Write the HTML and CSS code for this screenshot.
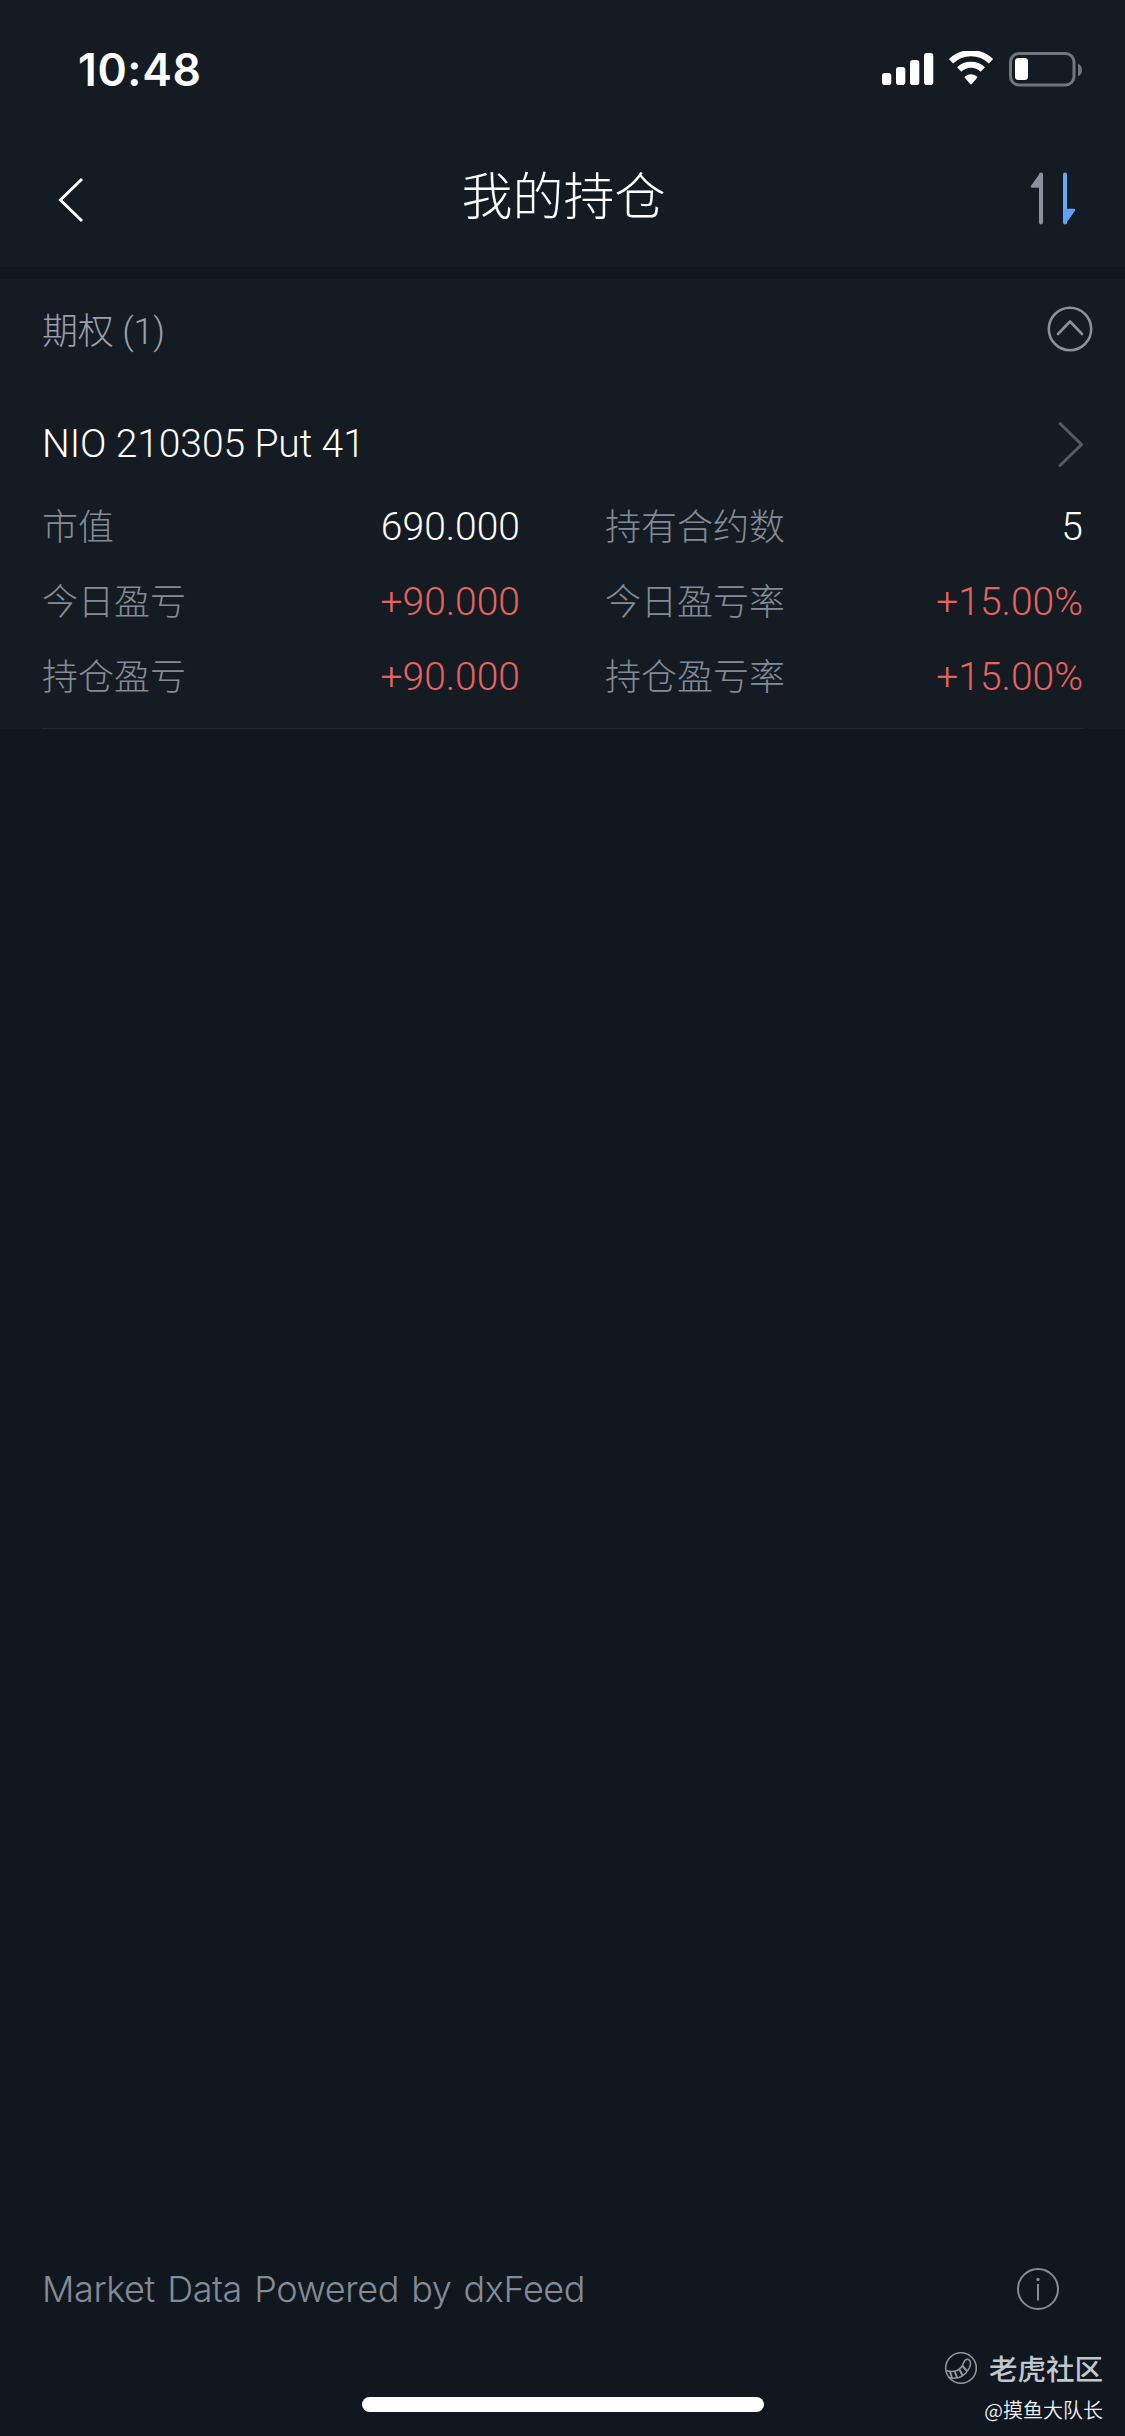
FILE: index.html
```html
<!DOCTYPE html>
<html lang="zh-CN">
<head>
<meta charset="utf-8">
<title>我的持仓</title>
<link rel="stylesheet" href="styles.css">
</head>
<body>
<div class="screen">
  <header class="top">
    <div class="status">
      <span class="time">10:48</span>
      <svg class="status-icons" width="202" height="36" viewBox="0 0 202 36">
        <g fill="#fff">
          <rect x="0" y="22" width="9.300" height="12" rx="2.800"/>
          <rect x="14" y="16" width="9.300" height="18" rx="2.800"/>
          <rect x="28" y="9" width="9.300" height="25" rx="2.800"/>
          <rect x="42" y="2" width="9.300" height="32" rx="2.800"/>
          <path d="M83 25.500q6-4.500 12 0q.9.800 0 1.600l-5.200 6q-.8.700-1.600 0l-5.200-6q-.9-.8 0-1.600z"/>
        </g>
        <path d="M69 11.200A29 29 0 0 1 109 11.200M77.200 19.400A17.300 17.300 0 0 1 100.800 19.400" transform="translate(0 -1)" fill="none" stroke="#fff" stroke-width="6.200"/>
        <rect x="128.500" y="2.500" width="63.500" height="31.500" rx="8.500" fill="none" stroke="#73777c" stroke-width="3"/>
        <rect x="133" y="7" width="13" height="22" rx="3.500" fill="#fff"/>
        <path d="M196 12.500q4 2 4 6.500t-4 6.500z" fill="#73777c"/>
      </svg>
    </div>
    <nav class="nav">
      <svg class="nav-icon" width="60" height="60" viewBox="0 0 60 60"><path d="M40 9L18.500 30L40 51" fill="none" stroke="#fff" stroke-width="3"/></svg>
      <h1 class="title">我的持仓</h1>
      <svg class="nav-icon" width="60" height="60" viewBox="0 0 60 60">
        <path d="M16 4.500V52.500" stroke="#8b909c" stroke-width="4" stroke-linecap="round"/>
        <path d="M16 4L7 16.500H16z" fill="#8b909c" stroke="#8b909c" stroke-width="2.500" stroke-linejoin="round"/>
        <path d="M40 4.500V52.500" stroke="#6ba5f5" stroke-width="4" stroke-linecap="round"/>
        <path d="M40 52.500L49 40H40z" fill="#5fa0fb" stroke="#5fa0fb" stroke-width="2.500" stroke-linejoin="round"/>
      </svg>
    </nav>
  </header>

  <main class="panel">
    <div class="section-head">
      <span class="section-name">期权 (1)</span>
      <svg width="46" height="46" viewBox="0 0 46 46" fill="none" stroke="#8b909c" stroke-width="2.600" stroke-linecap="round" stroke-linejoin="round"><circle cx="23" cy="23" r="21.200"/><path d="M11 28L23 15.500L35 28"/></svg>
    </div>
    <section class="holding">
      <div class="holding-head">
        <span class="holding-name">NIO 210305 Put 41</span>
        <svg width="28" height="48" viewBox="0 0 28 48"><path d="M5 2.500L26.500 23.500L5 44.500" fill="none" stroke="#555a61" stroke-width="3" stroke-linecap="round"/></svg>
      </div>
      <dl class="stats">
        <div class="stat"><dt>市值</dt><dd>690.000</dd></div>
        <div class="stat"><dt>持有合约数</dt><dd>5</dd></div>
        <div class="stat"><dt>今日盈亏</dt><dd class="gain">+90.000</dd></div>
        <div class="stat"><dt>今日盈亏率</dt><dd class="gain">+15.00%</dd></div>
        <div class="stat"><dt>持仓盈亏</dt><dd class="gain">+90.000</dd></div>
        <div class="stat"><dt>持仓盈亏率</dt><dd class="gain">+15.00%</dd></div>
      </dl>
    </section>
  </main>

  <footer class="footer">
    <span class="source">Market Data Powered by dxFeed</span>
    <svg width="44" height="44" viewBox="0 0 44 44"><circle cx="22" cy="22" r="20" fill="none" stroke="#858b96" stroke-width="2"/><path d="M22 17V33.500" stroke="#858b96" stroke-width="2"/><circle cx="22" cy="12.500" r="1.700" fill="#858b96"/></svg>
  </footer>
  <div class="home-bar"></div>
  <div class="credit">
    <div class="brand">
      <svg width="34" height="34" viewBox="0 0 34 34" fill="none" stroke="#969a9f" stroke-width="1.500">
        <circle cx="17" cy="17" r="15.300"/>
        <path d="M2.500 19.500Q8 21.500 13 19.500Q18 17 19.500 12Q21.500 7.500 24.500 8.500Q28 10.500 25.500 16.500Q22 24 15 26.500Q9 28 5 26.500"/>
        <path d="M6 21L8 27M11 21L13 26.500M15.500 18.500L18.500 24.500M18.500 15L23 20" stroke-width="2"/>
      </svg>
      <span class="brand-name">老虎社区</span>
    </div>
    <span class="author">@摸鱼大队长</span>
  </div>
</div>
</body>
</html>
```
FILE: styles.css
```css
* { box-sizing: border-box; }
body { margin: 0; background: #10171f; }
.screen {
  position: relative;
  display: flex;
  flex-direction: column;
  width: 1125px;
  height: 2436px;
  background: #10171f;
  color: #fff;
  font-family: Roboto, "Noto Sans CJK SC", sans-serif;
  font-weight: 300;
  overflow: hidden;
}
.top { height: 267px; background: #141b22; }
.status {
  display: flex;
  justify-content: space-between;
  height: 137px;
  padding: 41px 41px 0 78px;
}
.time { font: 600 44.500px/58px Inter, sans-serif; letter-spacing: 0.600px; }
.status-icons { margin-top: 10px; }
.nav {
  display: flex;
  align-items: center;
  justify-content: space-between;
  height: 125px;
  padding: 0 40px 0 42px;
}
.title { margin: 0; font: 300 51px/76px "Noto Sans CJK SC", sans-serif; padding-bottom: 14px; }
.panel {
  height: 450px;
  margin-top: 12px;
  background: #141b22;
}
.section-head {
  display: flex;
  align-items: center;
  justify-content: space-between;
  height: 100px;
  padding: 0 32px 0 42px;
}
.section-name { font-size: 36px; line-height: 52px; letter-spacing: -0.200px; color: #9a9fae; padding-top: 5px; }
.holding { margin: 0 42px; height: 350px; border-bottom: 1px solid #20272f; }
.holding-head { display: flex; align-items: center; justify-content: space-between; height: 110px; padding-top: 22px; }
.holding-name { font-size: 39px; line-height: 50px; letter-spacing: -0.080px; padding-bottom: 2px; }
.stats {
  display: grid;
  grid-template-columns: 478px 478px;
  grid-auto-rows: 75px;
  column-gap: 85px;
  margin: 0;
}
.stat { display: flex; align-items: center; justify-content: space-between; }
.stat dt { font-size: 36px; line-height: 52px; padding-top: 2px; color: #858b96; }
.stat dd { margin: 0; font-size: 39px; line-height: 52px; }
.stat .gain { color: #e8635f; }
.footer {
  display: flex;
  align-items: center;
  justify-content: space-between;
  height: 60px;
  margin-top: auto;
  padding: 0 65px 0 42px;
}
.source { font: 300 36px/50px Inter, sans-serif; letter-spacing: -0.400px; word-spacing: 2.500px; color: #858b96; }
.home-bar { width: 402px; height: 15px; margin: 78px 0 24px 362px; border-radius: 8px; background: #fff; }
.credit {
  position: absolute;
  right: 22px;
  bottom: 9px;
  display: flex;
  flex-direction: column;
  align-items: flex-end;
  gap: 5px;
}
.brand { display: flex; align-items: center; gap: 11px; }
.brand-name { font: 500 28.500px/40px "Noto Sans CJK SC", sans-serif; color: #c2c7cd; }
.author { font: 350 20px/34px "Noto Sans CJK SC", sans-serif; color: #eef1f5; }
```
